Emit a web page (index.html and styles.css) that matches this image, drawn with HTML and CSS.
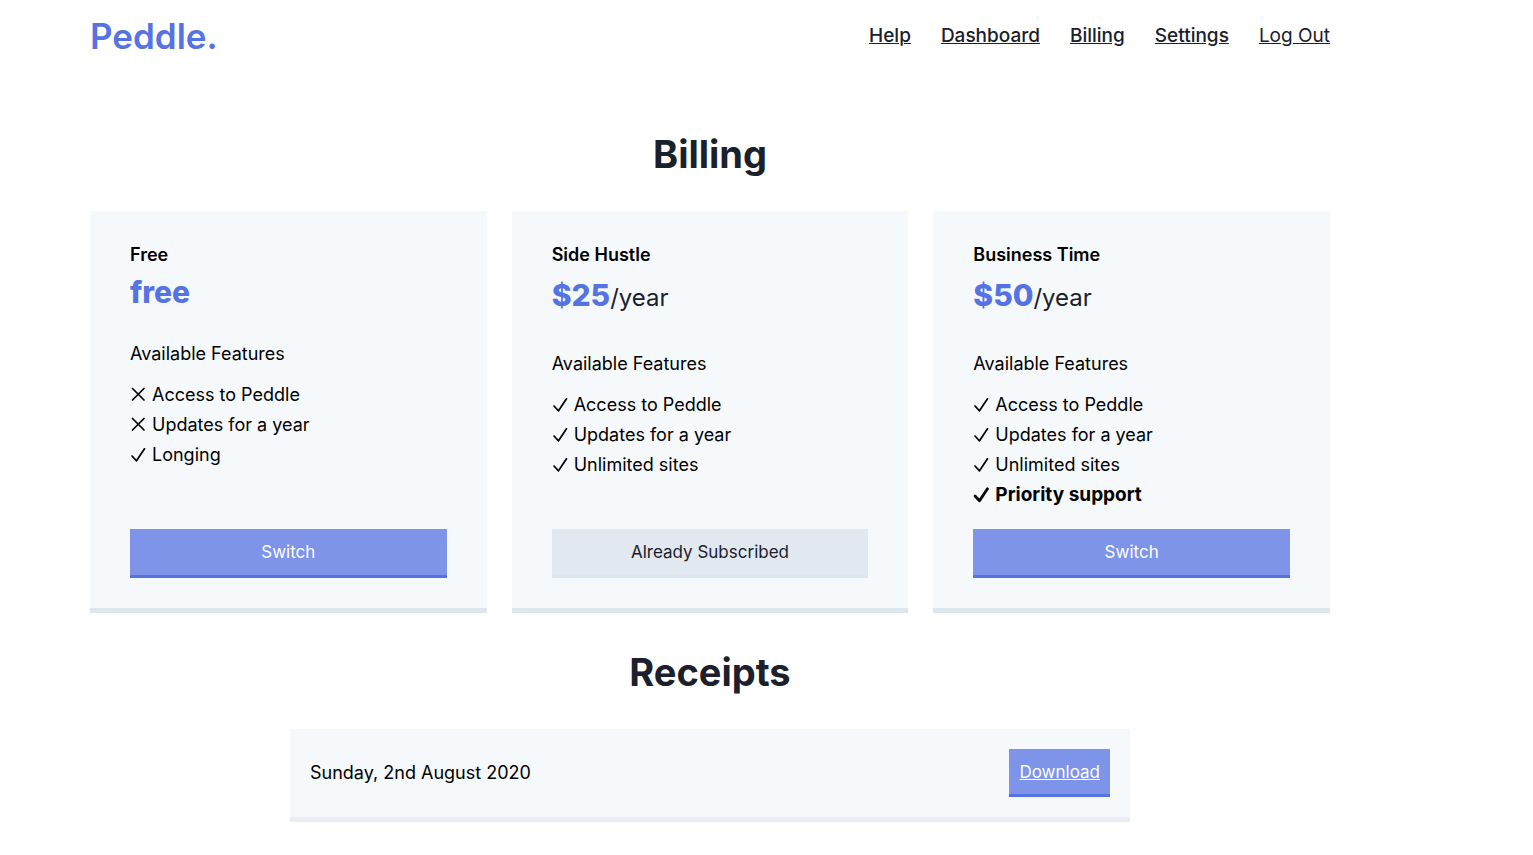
FILE: index.html
```html
<!DOCTYPE html>
<html lang="en">
<head>
  <meta charset="UTF-8" />
  <meta name="viewport" content="width=device-width, initial-scale=1.0"/>
  <title>Billing - Peddle</title>
  <link rel="stylesheet" href="styles.css">
</head>
<body>

  <!-- Shared icons -->
  <svg class="sprite" aria-hidden="true">
    <symbol id="check" viewBox="0 0 17 18">
      <path d="M2 10 L6.5 14.8 L14.5 2.8" />
    </symbol>
    <symbol id="cross" viewBox="0 0 17 18">
      <path d="M2.5 2.5 L14 14 M14 2.5 L2.5 14" />
    </symbol>
  </svg>

  <div class="container">
    <header class="header">
      <a class="logo" href="#">Peddle.</a>
      <nav class="nav">
        <a href="#">Help</a>
        <a href="#">Dashboard</a>
        <a href="#">Billing</a>
        <a href="#">Settings</a>
        <a class="logout" href="#">Log Out</a>
      </nav>
    </header>

    <main>
      <h1>Billing</h1>

      <div class="plans">
        <section class="plan">
          <h2>Free</h2>
          <p class="price"><strong>free</strong></p>
          <p class="features-title">Available Features</p>
          <ul class="features">
            <li><svg class="icon"><use href="#cross" /></svg>Access to Peddle</li>
            <li><svg class="icon"><use href="#cross" /></svg>Updates for a year</li>
            <li><svg class="icon"><use href="#check" /></svg>Longing</li>
          </ul>
          <button class="btn" type="button">Switch</button>
        </section>

        <section class="plan">
          <h2>Side Hustle</h2>
          <p class="price paid"><strong>$25</strong>/year</p>
          <p class="features-title">Available Features</p>
          <ul class="features">
            <li><svg class="icon"><use href="#check" /></svg>Access to Peddle</li>
            <li><svg class="icon"><use href="#check" /></svg>Updates for a year</li>
            <li><svg class="icon"><use href="#check" /></svg>Unlimited sites</li>
          </ul>
          <button class="btn current" type="button" disabled>Already Subscribed</button>
        </section>

        <section class="plan">
          <h2>Business Time</h2>
          <p class="price paid"><strong>$50</strong>/year</p>
          <p class="features-title">Available Features</p>
          <ul class="features">
            <li><svg class="icon"><use href="#check" /></svg>Access to Peddle</li>
            <li><svg class="icon"><use href="#check" /></svg>Updates for a year</li>
            <li><svg class="icon"><use href="#check" /></svg>Unlimited sites</li>
            <li class="bold"><svg class="icon"><use href="#check" /></svg>Priority support</li>
          </ul>
          <button class="btn" type="button">Switch</button>
        </section>
      </div>

      <h1>Receipts</h1>

      <div class="receipt">
        <span>Sunday, 2nd August 2020</span>
        <a class="btn download" href="#">Download</a>
      </div>
    </main>
  </div>

</body>
</html>
```
FILE: styles.css
```css
* {
  margin: 0;
  padding: 0;
  box-sizing: border-box;
}

body {
  font-family: Inter, "Liberation Sans", sans-serif;
  font-size: 18px;
  line-height: 30px;
  color: #000;
  background: #fff;
}

.sprite {
  display: none;
}

.container {
  max-width: 1420px;
  padding: 0 90px 32px;
}

/* Header */
.header {
  display: flex;
  justify-content: space-between;
  align-items: center;
  padding: 8px 0 55px;
}

.logo {
  font-size: 35px;
  line-height: 56px;
  font-weight: 600;
  color: #5673e3;
  text-decoration: none;
}

.nav {
  display: flex;
  gap: 30px;
  font-size: 19px;
}

.nav a {
  font-weight: 500;
  color: #1a202c;
}

.nav .logout {
  font-weight: 400;
}

h1 {
  margin: 7px 0 28px;
  font-size: 38px;
  line-height: 57px;
  font-weight: 700;
  text-align: center;
  color: #1a202c;
}

/* Plans */
.plans {
  display: grid;
  grid-template-columns: repeat(3, 1fr);
  gap: 25px;
  margin-bottom: 31px;
}

.plan {
  display: flex;
  flex-direction: column;
  padding: 30px 40px;
  background: #f5f9fc;
  border-bottom: 5px solid #dce6ed;
}

.plan h2 {
  font-size: 18px;
  line-height: 27px;
  font-weight: 600;
}

.price {
  margin-bottom: 20px;
  font-size: 24px;
  line-height: 48px;
  color: #1a202c;
}

.price.paid {
  margin-bottom: 24px;
  line-height: 54px;
}

.price strong {
  font-size: 30px;
  font-weight: 800;
  color: #5673e3;
}

.features-title {
  margin-bottom: 11px;
}

.features {
  margin-bottom: 19px;
  list-style: none;
}

.features li {
  display: flex;
  align-items: center;
  gap: 5px;
}

.features .bold {
  font-size: 19px;
  font-weight: 700;
}

.icon {
  width: 17px;
  height: 18px;
  fill: none;
  stroke: currentColor;
  stroke-width: 1.7;
  stroke-linecap: round;
  stroke-linejoin: round;
}

.bold .icon {
  stroke-width: 2.8;
}

/* Buttons */
.btn {
  margin-top: auto;
  padding: 8px 10px;
  font-family: inherit;
  font-size: 17px;
  line-height: 30px;
  text-align: center;
  color: #fff;
  background: #7d94e8;
  border: none;
  border-bottom: 3px solid #5673e3;
  cursor: pointer;
}

.btn.current {
  color: #1a202c;
  background: #e2e8f0;
  border-bottom-color: #dde5ee;
  cursor: default;
}

.btn.download {
  margin-top: 0;
  padding-bottom: 7px;
}

/* Receipts */
.receipt {
  display: flex;
  justify-content: space-between;
  align-items: center;
  max-width: 840px;
  margin: 0 auto;
  padding: 20px;
  background: #f5f9fc;
  border-bottom: 5px solid #e9eef5;
}
```
